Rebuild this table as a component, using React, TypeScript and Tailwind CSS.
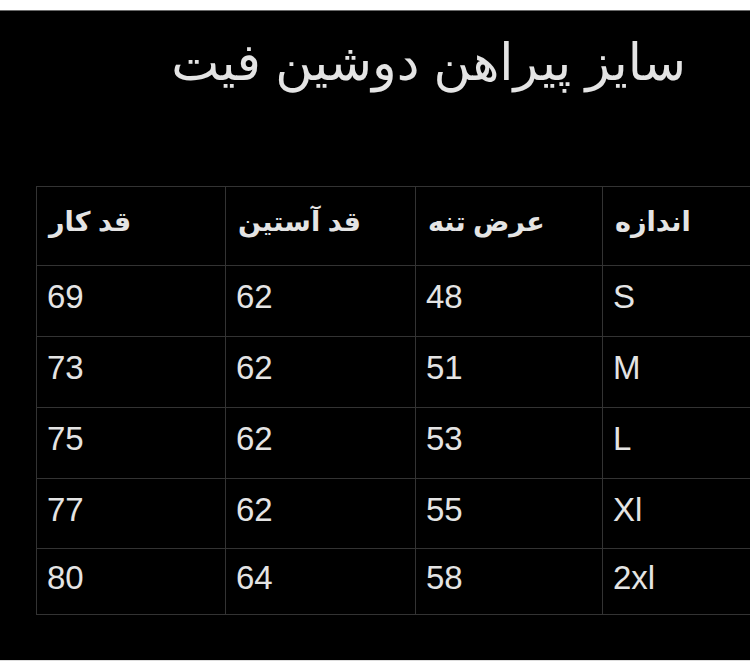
import React from "react";

const rows: string[][] = [
  ["69", "62", "48", "S"],
  ["73", "62", "51", "M"],
  ["75", "62", "53", "L"],
  ["77", "62", "55", "Xl"],
  ["80", "64", "58", "2xl"],
];

const rowH = ["h-[71px]", "h-[71px]", "h-[71px]", "h-[70px]", "h-[66px]"];

const headers = ["قد کار", "قد آستین", "عرض تنه", "اندازه"];

export default function App() {
  const font = { fontFamily: '"Liberation Sans", "DejaVu Sans", sans-serif' };
  return (
    <div className="w-[750px] h-[661px] bg-white flex flex-col overflow-hidden" style={font}>
      <div className="h-[10px] bg-white shrink-0" />
      <div className="h-[650px] bg-black border-t border-[#6a6a6a] shrink-0 flex flex-col">
        <div
          dir="rtl"
          className="pr-[64px] pt-[20px] h-[80px] text-[51px] leading-[64px] text-[#e4e4e4]"
        >
          سایز پیراهن دوشین فیت
        </div>
        <div className="ml-[36px] mt-[95px] w-[714px] border-l border-t border-[#333333] text-[#e4e4e4]">
          <div className="grid grid-cols-[189px_190px_187px_1fr] h-[79px]">
            {headers.map((h, i) => (
              <div
                key={i}
                className={`flex items-center pl-[12px] pb-[8px] border-b border-[#333333] ${i < 3 ? "border-r" : ""} text-[27px] font-bold`}
              >
                <span dir="rtl">{h}</span>
              </div>
            ))}
          </div>
          {rows.map((r, ri) => (
            <div key={ri} className={`grid grid-cols-[189px_190px_187px_1fr] ${rowH[ri]}`}>
              {r.map((c, ci) => (
                <div
                  key={ci}
                  className={`flex items-center pl-[10px] pb-[8px] border-b border-[#333333] ${ci < 3 ? "border-r" : ""} text-[33px]`}
                >
                  {c}
                </div>
              ))}
            </div>
          ))}
        </div>
      </div>
      <div className="h-[1px] bg-[#dddddd]" />
    </div>
  );
}
